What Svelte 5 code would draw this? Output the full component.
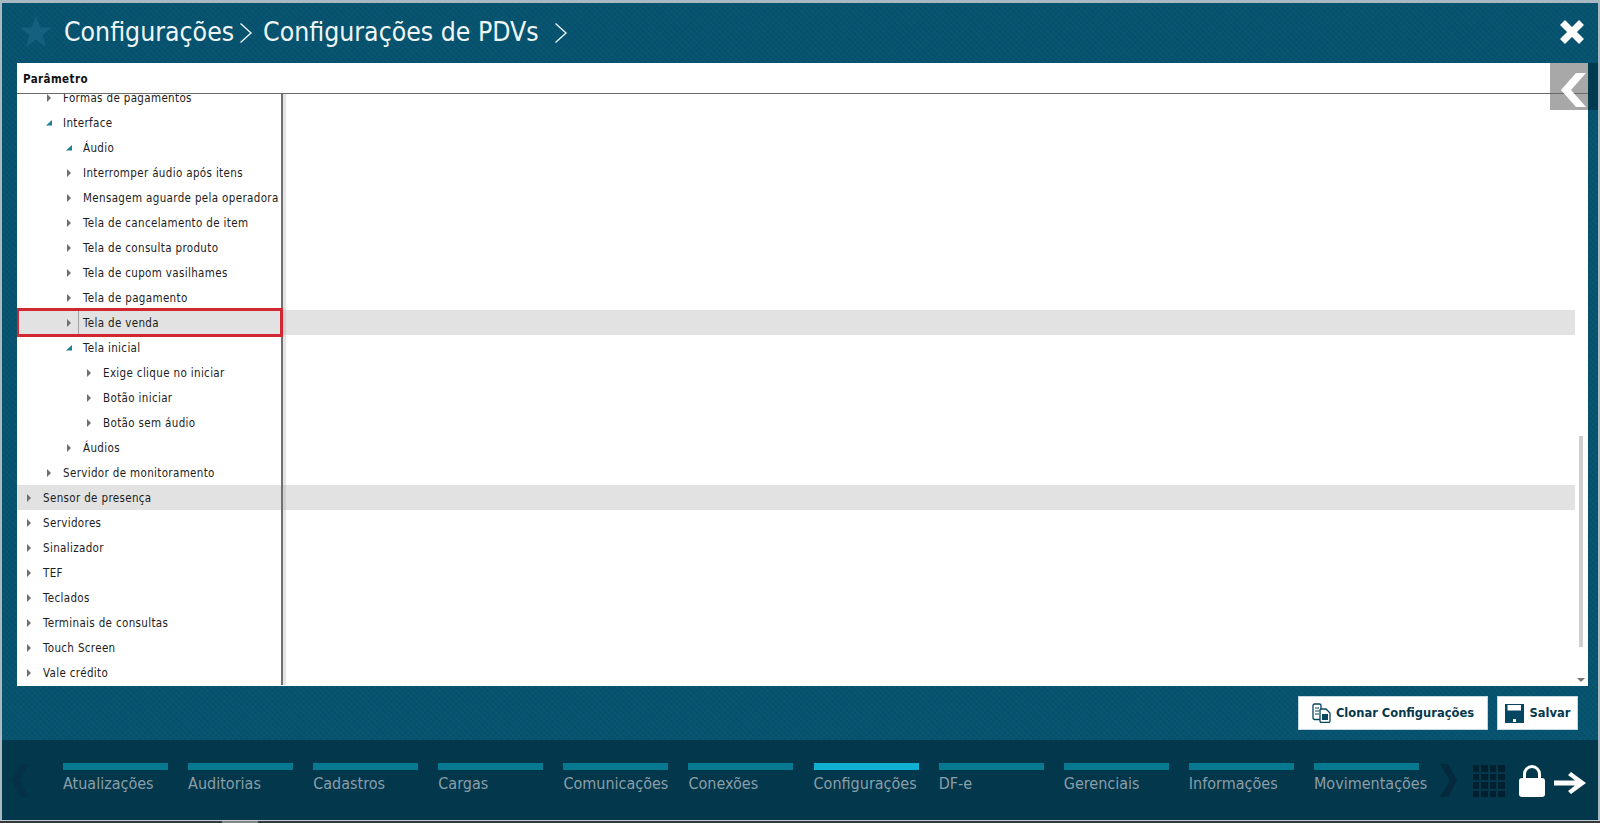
<script>
	const rows = [
		['Formas de pagamentos', 1, false],
		['Interface', 1, true],
		['Áudio', 2, true],
		['Interromper áudio após itens', 2, false],
		['Mensagem aguarde pela operadora', 2, false],
		['Tela de cancelamento de item', 2, false],
		['Tela de consulta produto', 2, false],
		['Tela de cupom vasilhames', 2, false],
		['Tela de pagamento', 2, false],
		['Tela de venda', 2, false, 'marked'],
		['Tela inicial', 2, true],
		['Exige clique no iniciar', 3, false],
		['Botão iniciar', 3, false],
		['Botão sem áudio', 3, false],
		['Áudios', 2, false],
		['Servidor de monitoramento', 1, false],
		['Sensor de presença', 0, false, 'hover'],
		['Servidores', 0, false],
		['Sinalizador', 0, false],
		['TEF', 0, false],
		['Teclados', 0, false],
		['Terminais de consultas', 0, false],
		['Touch Screen', 0, false],
		['Vale crédito', 0, false]
	];

	const menu = ['Atualizações', 'Auditorias', 'Cadastros', 'Cargas', 'Comunicações', 'Conexões', 'Configurações', 'DF-e', 'Gerenciais', 'Informações', 'Movimentações'];
</script>

<div class="frame">
	<header class="top">
		<svg class="star" viewBox="0 0 32 32" width="32" height="32"><path d="M16 0l4.400 11.600H32l-9.400 7.400L26 31l-10-7.200L6 31l3.400-12L0 11.600h11.600z" fill="#14607f" /></svg>
		<h1>Configurações</h1>
		<svg class="crumb" viewBox="0 0 14 22" width="14" height="22"><path d="M1.500 1.500L12 11 1.500 20.500" fill="none" stroke="#e8f1f4" stroke-width="1.400" /></svg>
		<h1>Configurações de PDVs</h1>
		<svg class="crumb last" viewBox="0 0 14 22" width="14" height="22"><path d="M1.500 1.500L12 11 1.500 20.500" fill="none" stroke="#e8f1f4" stroke-width="1.400" /></svg>
		<svg class="close" viewBox="0 0 26 26" width="26" height="26"><path d="M3.500 3.500l19 19M22.500 3.500l-19 19" stroke="#fff" stroke-width="7" /></svg>
	</header>

	<section class="panel">
		<div class="head">Parâmetro</div>
		<div class="tree">
			<div class="rows">
				{#each rows as [label, level, open, kind]}
					<div class="row" class:hl={kind}>
						<div class="cell" style="padding-left: {level * 20 + 9}px">
							{#if open}
								<svg class="arrow" viewBox="0 0 6 6" width="6" height="6"><path d="M0 5.500h6V0z" fill="#1a7f96" /></svg>
							{:else}
								<svg class="arrow" viewBox="0 0 6 8" width="6" height="8"><path d="M1 0l4 4-4 4z" fill="#6f6f6f" /></svg>
							{/if}
							<span>{label}</span>
						</div>
						<div class="rest"></div>
						{#if kind === 'marked'}
							<i class="tick"></i>
							<i class="mark"></i>
						{/if}
					</div>
				{/each}
			</div>
			<i class="thumb"></i>
			<svg class="down" viewBox="0 0 8 4" width="8" height="4"><path d="M0 0h8L4 4z" fill="#777" /></svg>
		</div>
		<button class="tab" type="button" aria-label="Recolher">
			<svg viewBox="0 0 25 34" width="25" height="34"><path d="M15 0h10L10 17l15 17H15L0 17z" fill="#fff" /></svg>
		</button>
	</section>

	<div class="actions">
		<button type="button" class="btn clone">
			<svg viewBox="0 0 19 20" width="19" height="20">
				<path d="M2.500 1h5a1.500 1.500 0 0 1 1.500 1.500V15a1.500 1.500 0 0 1-1.500 1.500h-5A1.500 1.500 0 0 1 1 15V2.500A1.500 1.500 0 0 1 2.500 1z" fill="#fff" stroke="#04465f" stroke-width="1.300" />
				<path d="M9 6h5l4 4v8a1.500 1.500 0 0 1-1.500 1.500h-7.500A1.500 1.500 0 0 1 8 18V7a1 1 0 0 1 1-1z" fill="#fff" stroke="#04465f" stroke-width="1.300" />
				<path d="M3 5h4M3 8h4M3 11h4" stroke="#04465f" stroke-width="1.100" fill="none" />
				<path d="M10 11h6v6h-6z" fill="#04465f" />
			</svg>
			Clonar Configurações
		</button>
		<button type="button" class="btn save">
			<svg viewBox="0 0 19 19" width="19" height="19"><path d="M0 0h19v19H0z" fill="#04465f" /><path d="M2.500 1h13.500v5.500H2.500z" fill="#fff" /><path d="M8 15h3v3H8z" fill="#fff" /></svg>
			Salvar
		</button>
	</div>

	<nav class="dock">
		<svg class="prev" viewBox="0 0 17 33" width="17" height="33"><path d="M9 0h8L7 16.500 17 33H9L0 16.500z" fill="#043148" /></svg>
		<ul>
			{#each menu as item}
				<li class:active={item === 'Configurações'}><b></b>{item}</li>
			{/each}
		</ul>
		<svg class="next" viewBox="0 0 17 33" width="17" height="33"><path d="M0 0h8l9 16.500L8 33H0l10-16.500z" fill="#05293d" /></svg>
		<div class="grid">
			{#each Array(16) as _}<i></i>{/each}
		</div>
		<svg class="lock" viewBox="0 0 26 32" width="26" height="32"><path d="M5.500 14V9a7.500 7.500 0 0 1 15 0v5" fill="none" stroke="#fff" stroke-width="3" /><rect x="0" y="13" width="26" height="19" rx="3" fill="#fff" /></svg>
		<svg class="exit" viewBox="0 0 32 22" width="32" height="22"><path d="M0 8.500h21L14 3l3-3 15 11-15 11-3-3 7-5.500H0z" fill="#fff" /></svg>
	</nav>
</div>
<div class="strip"><i></i></div>

<style>
	:global(body) { margin: 0; background: #a9b9c2; }
	.frame {
		height: 817px; margin-top: 3px; margin-right: 2px; margin-left: 2px;
		display: flex; flex-direction: column; position: relative; overflow: hidden;
		background-color: #05536f;
		background-image: repeating-linear-gradient(45deg, rgba(255,255,255,.018) 0 2px, transparent 2px 4px), repeating-linear-gradient(-45deg, rgba(0,0,0,.03) 0 2px, transparent 2px 4px);
		font-family: "DejaVu Sans Condensed", "DejaVu Sans", sans-serif;
	}
	.strip { height: 3px; border-top: 1px solid #c0c8cc; box-sizing: border-box; background: #333a3d; padding-left: 222px; }
	.strip i { display: block; width: 36px; height: 2px; background: #7b8a8c; }
	.top { height: 60px; display: flex; align-items: center; padding: 0 0 2px 18px; box-sizing: border-box; color: #f0f6f8; flex: none; }
	.star { margin-right: 12px; }
	h1 { margin: 0; font-weight: 400; font-size: 26.4px; line-height: 58px; font-family: "DejaVu Sans Condensed", "DejaVu Sans", sans-serif; white-space: nowrap; }
	.crumb { margin: 2px 10px 0 5px; }
	.crumb.last { margin-left: 15px; }
	.close { margin-left: auto; margin-right: 13px; }

	.panel { height: 623px; flex: none; margin: 0 10px 0 15px; background: #fff; position: relative; color: #1c1c1c; }
	.head { height: 30px; line-height: 32px; padding-left: 6px; font-size: 11.5px; font-weight: 700; letter-spacing: .4px; border-bottom: 1px solid #6b6b6b; color: #111; }
	.tree { height: 592px; position: relative; overflow: hidden; }
	.rows { margin-top: -9px; }
	.row { height: 25px; display: flex; position: relative; }
	.cell { width: 266px; flex: none; display: flex; align-items: center; border-right: 2px solid #707070; box-sizing: border-box; font-size: 11.5px; letter-spacing: .35px; white-space: nowrap; overflow: hidden; }
	.arrow { width: 6px; margin-right: 11px; flex: none; }
	.rest { width: 3px; background: #e4e4e4; flex: none; }
	.row.hl { background: linear-gradient(#e2e2e2, #e2e2e2) no-repeat 0 0 / 1558px 100%; }
	.row.hl .rest { background: #d0d0d0; }
	.tick { position: absolute; left: 61px; top: 0; bottom: 0; width: 1px; background: #a2a2a2; }
	.mark { position: absolute; left: -1px; top: -2px; width: 267px; height: 29px; box-sizing: border-box; border: 3px solid #d12730; z-index: 1; }
	.thumb { position: absolute; left: 1562px; top: 342px; width: 4px; height: 211px; background: #cfcfcf; }
	.down { position: absolute; left: 1560px; top: 584px; }
	.tab { position: absolute; top: 0; right: -10px; width: 48px; height: 47px; padding: 6px 0 0 11px; border: 0; border-right: 10px solid #043a50; background: linear-gradient(#6b6b6b, #6b6b6b) no-repeat 0 30px / 100% 1px, #a8a8a8; text-align: left; box-sizing: border-box; }
	.tab svg { display: block; }

	.actions { flex: 1; display: flex; justify-content: flex-end; align-items: flex-start; gap: 9px; padding: 10px 20px 0 0; }
	.btn { height: 34px; display: flex; align-items: center; justify-content: center; gap: 5px; background: #fff; border: 1px solid #c4d6de; color: #06384d; font: 700 11.5px "DejaVu Sans", sans-serif; letter-spacing: 0; padding: 0; white-space: nowrap; }
	.clone { width: 190px; }
	.save { width: 81px; gap: 6px; }

	.dock { height: 80px; flex: none; background: #03374c; display: flex; position: relative; color: #8a9ea8; }
	.prev { margin: 24px 0 0 10px; flex: none; }
	ul { list-style: none; margin: 23px 0 0; padding: 0 0 0 34px; display: flex; gap: 20.100px; flex: none; }
	li { width: 105px; font-size: 16px; line-height: 28px; white-space: nowrap; }
	li b { display: block; height: 7px; background: #077a92; }
	li.active b { background: #0fb0d2; }
	.next { margin: 24px 0 0 21px; flex: none; }
	.grid { margin: 25px 0 0 16px; width: 32px; height: 32px; display: grid; grid-template-columns: repeat(4, 6.500px); grid-auto-rows: 6.500px; gap: 2px; flex: none; }
	.grid i { background: #01202f; }
	.lock { margin: 25px 0 0 14px; flex: none; }
	.exit { margin: 32px 0 0 9px; flex: none; }
</style>
